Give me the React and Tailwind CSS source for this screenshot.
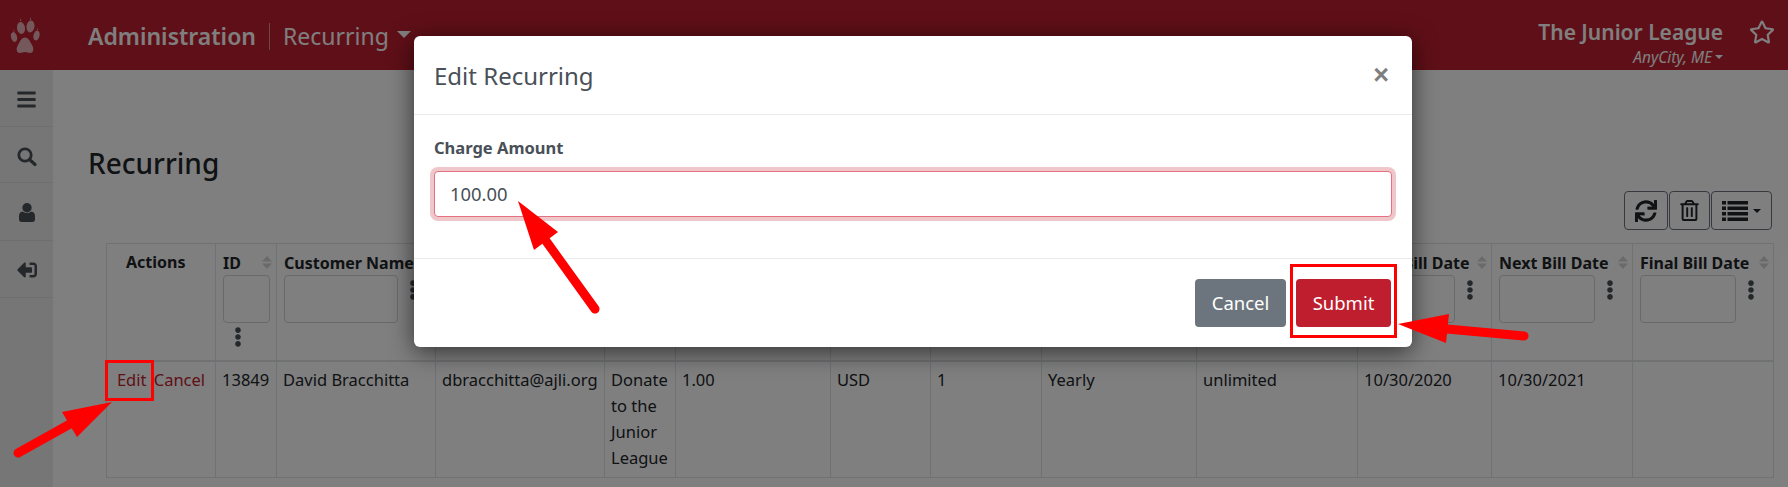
import React from "react";
import { FaBars, FaSignOutAlt, FaRegStar, FaSync, FaRegTrashAlt, FaEllipsisV } from "react-icons/fa";

const font = { fontFamily: '"Noto Sans", sans-serif' };

function Caret({ className }) {
  return <span className={"inline-block border-x-[7px] border-t-[7px] border-x-transparent border-t-current " + className} />;
}

function Paw() {
  return (
    <svg width="30" height="37" viewBox="0 0 30 37" fill="#fff" opacity="0.65">
      <ellipse cx="11" cy="11" rx="4" ry="6" transform="rotate(-8 11 11)" />
      <ellipse cx="20.500" cy="9.500" rx="4" ry="6" transform="rotate(8 20.500 9.500)" />
      <ellipse cx="4" cy="20" rx="3" ry="5" transform="rotate(-14 4 20)" />
      <ellipse cx="26.500" cy="18.500" rx="3" ry="5" transform="rotate(14 26.500 18.500)" />
      <path d="M15 20.500c3 0 5 3.500 7 7.500 2 3 2 8-2 8-2 0-3-1-5-1s-3 1-5 1c-4 0-4-5-2-8 2-4 4-7.500 7-7.500z" />
      <path d="M10 4l.5-3 .7 3zM20 3l.7-3 .5 3zM3.500 14.500l.3-2.500.8 2.500zM27 13l.4-2.500.6 2.500z" />
    </svg>
  );
}

function Sort() {
  return (
    <svg width="10" height="13" viewBox="0 0 10 13" fill="#d4d4d4" className="shrink-0">
      <path d="M5 0l5 5.500H0zM5 13l5-5.500H0z" />
    </svg>
  );
}

function SearchIcon() {
  return (
    <svg width="20" height="19" viewBox="0 0 20 19" fill="none" stroke="currentColor">
      <circle cx="8" cy="8" r="6.2" strokeWidth="2.800" />
      <path d="M12.500 12.500L18 17.500" strokeWidth="3.200" strokeLinecap="round" />
    </svg>
  );
}

function UserIcon() {
  return (
    <svg width="16" height="19" viewBox="0 0 16 19" fill="currentColor">
      <circle cx="8" cy="4.700" r="4.700" />
      <path d="M3.500 8.500c1 .9 2.800 1.500 4.500 1.500s3.500-.6 4.500-1.500c2.200.2 3.500 2 3.500 4.500v3.500c0 1.400-1 2.500-2.500 2.500h-11C1 19 0 17.900 0 16.500V13c0-2.500 1.300-4.300 3.500-4.500z" />
    </svg>
  );
}

function ListIcon() {
  return (
    <svg width="26" height="20" viewBox="0 0 26 20" fill="currentColor">
      <path d="M0 0h4v3.500H0zM5.500 0H26v3.500H5.500zM0 5.500h4V9H0zM5.500 5.500H26V9H5.500zM0 11h4v3.500H0zM5.500 11H26v3.500H5.500zM0 16.500h4V20H0zM5.500 16.500H26V20H5.500z" />
    </svg>
  );
}

function Head({ label, inputClass, below }) {
  return (
    <th className="border border-[#dee2e6] border-b-2 align-top pl-[7px] pr-[4px] pt-[6px] text-left font-bold">
      <div className="flex items-center justify-between h-[25px] whitespace-nowrap">
        <span>{label}</span>
        <Sort />
      </div>
      <div className={below ? "" : "flex items-start"}>
        <div className={"h-[48px] border border-[#ced4da] rounded-[4px] bg-white shrink-0 " + inputClass} />
        <div className={below ? "pl-[5px] pt-[4px]" : "pl-[5px] pt-[5px]"}>
          <FaEllipsisV className="text-[#495057] text-[20px]" />
        </div>
      </div>
    </th>
  );
}

function Td({ children }) {
  return <td className="border border-[#dee2e6] border-t-0 align-top px-[6px] py-[5px] leading-[26px]">{children}</td>;
}

export default function App() {
  return (
    <div style={font} className="relative w-[1788px] h-[487px] overflow-hidden bg-white text-[#212529]">
      <header className="h-[70px] bg-[#bf1e2e] text-white flex items-center">
        <div className="w-[53px] pl-[10px] pt-[1px] shrink-0"><Paw /></div>
        <div className="ml-[35px] pt-[2px] flex items-center">
          <span className="text-[23px] font-semibold leading-none">Administration</span>
          <span className="w-px h-[27px] bg-white/50 mx-[13px]" />
          <span className="text-[23px] leading-none">Recurring</span>
          <Caret className="ml-[8px] mb-[3px]" />
        </div>
        <div className="ml-auto mr-[65px] pt-[13px] flex flex-col items-end">
          <span className="text-[21px] font-semibold leading-[28px]">The Junior League</span>
          <span className="text-[15.500px] italic leading-[18px] flex items-center mt-[2px]">
            AnyCity, ME
            <span className="ml-[3px] inline-block border-x-[4.500px] border-t-[4.500px] border-x-transparent border-t-current" />
          </span>
        </div>
        <FaRegStar className="absolute left-[1749px] top-[19px] text-[26px]" />
      </header>

      <div className="flex h-[417px]">
        <aside className="w-[53px] shrink-0 bg-[#ececec] text-[#495057] flex flex-col">
          <div className="h-[57px] pt-[3px] border-b border-[#dcdcdc] flex items-center justify-center"><FaBars className="text-[21px]" /></div>
          <div className="h-[56px] pt-[3px] border-b border-[#dcdcdc] flex items-center justify-center"><SearchIcon /></div>
          <div className="h-[58px] pt-[2px] border-b border-[#dcdcdc] flex items-center justify-center"><UserIcon /></div>
          <div className="h-[57px] pt-[1px] border-b border-[#dcdcdc] flex items-center justify-center"><FaSignOutAlt className="text-[20px] -scale-x-100" /></div>
        </aside>

        <main className="flex-1 pl-[35px] pr-[15px] pt-[74px] text-[16.500px]">
          <h1 className="text-[28px] font-medium leading-[38px]">Recurring</h1>
          <div className="flex justify-end mt-[9px] mr-[2px] text-[#212529]">
            <button className="w-[44px] h-[39px] border border-[#6c757d] rounded-[4px] flex items-center justify-center text-[22px]"><FaSync /></button>
            <button className="w-[41px] h-[39px] ml-[1px] border border-[#6c757d] rounded-[4px] flex items-center justify-center text-[21px]"><FaRegTrashAlt /></button>
            <button className="w-[61px] h-[39px] ml-[1px] border border-[#6c757d] rounded-[4px] flex items-center justify-center">
              <ListIcon />
              <span className="ml-[5px] inline-block border-x-[4.500px] border-t-[4.500px] border-x-transparent border-t-current" />
            </button>
          </div>
          <table className="ml-[18px] mt-[13px] w-[1667px] table-fixed border-collapse">
            <colgroup>
              <col className="w-[109px]" />
              <col className="w-[61px]" />
              <col className="w-[159px]" />
              <col className="w-[169px]" />
              <col className="w-[71px]" />
              <col className="w-[155px]" />
              <col className="w-[100px]" />
              <col className="w-[111px]" />
              <col className="w-[155px]" />
              <col className="w-[161px]" />
              <col className="w-[134px]" />
              <col className="w-[141px]" />
              <col className="w-[141px]" />
            </colgroup>
            <thead className="text-[16px]">
              <tr className="h-[117px]">
                <th className="border border-[#dee2e6] border-b-2 align-top pl-[19px] pt-[6px] font-bold text-left leading-[25px]">Actions</th>
                <Head label="ID" below inputClass="w-[47px]" />
                <Head label="Customer Name" inputClass="w-[114px]" />
                <Head label="Email" inputClass="w-[128px]" />
                <Head label="Plan" below inputClass="w-[55px]" />
                <Head label="Amount" inputClass="w-[114px]" />
                <Head label="Currency" inputClass="w-[60px]" />
                <Head label="Quantity" inputClass="w-[70px]" />
                <Head label="Frequency" inputClass="w-[114px]" />
                <Head label="Status" inputClass="w-[120px]" />
                <Head label="Last Bill Date" inputClass="w-[90px]" />
                <Head label="Next Bill Date" inputClass="w-[96px]" />
                <Head label="Final Bill Date" inputClass="w-[96px]" />
              </tr>
            </thead>
            <tbody>
              <tr className="h-[117px]">
                <td className="border border-[#dee2e6] border-t-0 align-top py-[5px] text-center leading-[26px] text-[#bf1e2e] whitespace-nowrap">
                  <a>Edit</a> <a className="ml-[3px]">Cancel</a>
                </td>
                <Td>13849</Td>
                <Td>David Bracchitta</Td>
                <Td>dbracchitta@ajli.org</Td>
                <Td>Donate to the Junior League</Td>
                <Td>1.00</Td>
                <Td>USD</Td>
                <Td>1</Td>
                <Td>Yearly</Td>
                <Td>unlimited</Td>
                <Td>10/30/2020</Td>
                <Td>10/30/2021</Td>
                <Td></Td>
              </tr>
            </tbody>
          </table>
        </main>
      </div>

      <div className="absolute inset-0 bg-black/50" />

      <div className="absolute left-[414px] top-[36px] w-[998px] h-[311px] bg-white rounded-[6px] shadow-[0_5px_25px_rgba(0,0,0,0.6)] flex flex-col text-[#495057]">
        <div className="h-[79px] border-b border-[#e9ecef] pl-[20px] pr-[23px] pt-[1px] flex items-center justify-between">
          <h5 className="text-[24px] font-normal leading-none">Edit Recurring</h5>
          <span style={{ fontFamily: '"Liberation Sans", sans-serif' }} className="text-[27px] font-bold text-[#7f7f7f] leading-none">×</span>
        </div>
        <div className="h-[144px] border-b border-[#e9ecef] pl-[20px] pr-[20px] pt-[21px]">
          <label className="block text-[16.500px] font-bold leading-[24px]">Charge Amount</label>
          <div className="mt-[11px] h-[46px] rounded-[4px] border border-[#e4717d] bg-white shadow-[0_0_0_4px_rgba(191,30,46,0.25)] flex items-center pl-[15px] text-[18.400px] text-[#495057]">100.00</div>
        </div>
        <div className="flex-1 flex justify-end items-start pt-[20px] pr-[21px] gap-[10px]">
          <button className="w-[91px] h-[48px] rounded-[4px] bg-[#6c757d] text-white text-[18.500px]">Cancel</button>
          <button className="w-[95px] h-[48px] rounded-[4px] bg-[#bf1e2e] text-white text-[18.500px]">Submit</button>
        </div>
      </div>

      <div className="absolute left-[105px] top-[360px] w-[49px] h-[41px] border-[3px] border-[#ff0000]" />
      <div className="absolute left-[1290px] top-[264px] w-[107px] h-[74px] border-[3px] border-[#ff0000]" />

      <svg className="absolute inset-0" width="1788" height="487" viewBox="0 0 1788 487" fill="#ff0000" stroke="none">
        <path d="M112 402L62 412L77 437Z" />
        <path d="M18 453L70 424" stroke="#ff0000" strokeWidth="9" strokeLinecap="round" />
        <path d="M518 201L558 232L534 250Z" />
        <path d="M595 309L546 241" stroke="#ff0000" strokeWidth="9" strokeLinecap="round" />
        <path d="M1398 324L1449 314L1446 343Z" />
        <path d="M1524 336L1447 329" stroke="#ff0000" strokeWidth="9" strokeLinecap="round" />
      </svg>
    </div>
  );
}
